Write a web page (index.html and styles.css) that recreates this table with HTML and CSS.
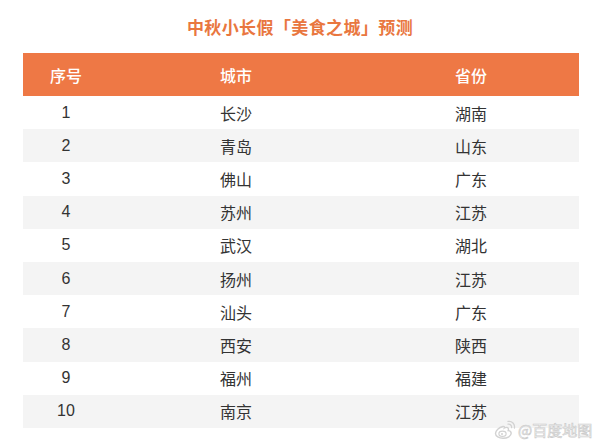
FILE: index.html
```html
<!DOCTYPE html>
<html lang="zh">
<head>
<meta charset="utf-8">
<link rel="stylesheet" href="styles.css">
</head>
<body>
<div class="page">
  <h1 class="title">中秋小长假「美食之城」预测</h1>
  <div class="table">
    <div class="row head"><div>序号</div><div>城市</div><div>省份</div></div>
    <div class="row"><div>1</div><div>长沙</div><div>湖南</div></div>
    <div class="row alt"><div>2</div><div>青岛</div><div>山东</div></div>
    <div class="row"><div>3</div><div>佛山</div><div>广东</div></div>
    <div class="row alt"><div>4</div><div>苏州</div><div>江苏</div></div>
    <div class="row"><div>5</div><div>武汉</div><div>湖北</div></div>
    <div class="row alt"><div>6</div><div>扬州</div><div>江苏</div></div>
    <div class="row"><div>7</div><div>汕头</div><div>广东</div></div>
    <div class="row alt"><div>8</div><div>西安</div><div>陕西</div></div>
    <div class="row"><div>9</div><div>福州</div><div>福建</div></div>
    <div class="row alt"><div>10</div><div>南京</div><div>江苏</div></div>
  </div>
  <div class="watermark">
    <svg class="weibo" width="22" height="20" viewBox="0 0 22 20">
      <path d="M9 6.5c-4 .8-7.5 4-7.5 7 0 2.8 3.5 4.8 7.5 4.8 4.6 0 8.2-2.3 8.2-5 0-1.8-1.6-2.6-3-2.7.6-1.6.3-3.2-1.6-3.2-1.2 0-2.2.6-2.2.6s.9-2-1.4-1.5z" fill="none" stroke="#d2d2d2" stroke-width="1.4"/>
      <ellipse cx="8.5" cy="13.8" rx="3.6" ry="2.6" fill="none" stroke="#d2d2d2" stroke-width="1.2"/>
      <circle cx="8" cy="14" r="1" fill="#d2d2d2"/>
      <path d="M14 4.2c2.2-.4 3.9 1.2 3.6 3.4" fill="none" stroke="#d2d2d2" stroke-width="1.3" stroke-linecap="round"/>
      <path d="M14 1.4c4-.7 7.2 2.6 6.4 6.6" fill="none" stroke="#d2d2d2" stroke-width="1.3" stroke-linecap="round"/>
    </svg>
    <span class="wm-text">@百度地图</span>
  </div>
</div>
</body>
</html>
```

FILE: styles.css
```css
html, body {
  margin: 0;
  padding: 0;
  background: #ffffff;
}
.page {
  width: 600px;
  height: 442px;
  position: relative;
  overflow: hidden;
  font-family: "Liberation Sans", "Noto Sans CJK SC", sans-serif;
}
.title {
  margin: 0;
  height: 53px;
  display: flex;
  align-items: center;
  justify-content: center;
  font-family: "Noto Sans CJK SC", sans-serif;
  font-size: 17px;
  font-weight: 700;
  color: #e9773f;
  letter-spacing: 0.4px;
}
.table {
  margin: 0 21px 0 23px;
  display: flex;
  flex-direction: column;
}
.row {
  display: grid;
  grid-template-columns: 86px 254px 216px;
  height: 33.2px;
  align-items: center;
  font-size: 16px;
  color: #333333;
}
.row > div {
  text-align: center;
}
.row.alt {
  background: #f4f4f4;
}
.row.head {
  height: 43px;
  background: #ee7845;
  color: #ffffff;
  font-family: "Noto Sans CJK SC", sans-serif;
  font-size: 16px;
  font-weight: 500;
}
.watermark {
  position: absolute;
  left: 494px;
  top: 420px;
  display: flex;
  align-items: center;
  gap: 2px;
  white-space: nowrap;
}
.wm-text {
  font-family: "Noto Sans CJK SC", sans-serif;
  font-size: 15px;
  line-height: 20px;
  color: #ffffff;
  -webkit-text-stroke: 0.7px #cccccc;
}
```
